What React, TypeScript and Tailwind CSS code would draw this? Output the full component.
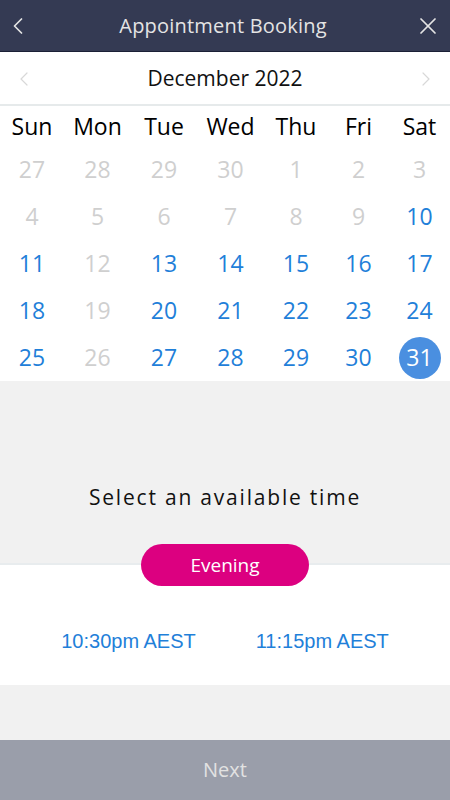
import { ChevronLeft, ChevronRight, X } from "lucide-react";

const weekdays = ["Sun", "Mon", "Tue", "Wed", "Thu", "Fri", "Sat"];

// [label, state] — state: 0 = outside/unavailable, 1 = available, 2 = selected
const days: [string, number][] = [
  ["27", 0], ["28", 0], ["29", 0], ["30", 0], ["1", 0], ["2", 0], ["3", 0],
  ["4", 0], ["5", 0], ["6", 0], ["7", 0], ["8", 0], ["9", 0], ["10", 1],
  ["11", 1], ["12", 0], ["13", 1], ["14", 1], ["15", 1], ["16", 1], ["17", 1],
  ["18", 1], ["19", 0], ["20", 1], ["21", 1], ["22", 1], ["23", 1], ["24", 1],
  ["25", 1], ["26", 0], ["27", 1], ["28", 1], ["29", 1], ["30", 1], ["31", 2],
];

const cols = "grid grid-cols-[64px_67px_66px_67px_64px_61px_61px]";

export default function App() {
  return (
    <div className="flex h-[800px] w-[450px] flex-col bg-[#f1f1f1] font-['Open_Sans',sans-serif]">
      <header className="flex h-[52px] shrink-0 items-center justify-between border-b border-[#1b2036] bg-[#343a53] pl-1 pr-2 text-[#e4e4e4]">
        <ChevronLeft className="h-7 w-7" strokeWidth={1.5} />
        <h1 className="text-[20px] tracking-[0.2px]">Appointment Booking</h1>
        <X className="h-7 w-7" strokeWidth={1.5} />
      </header>

      <section className="bg-white">
        <div className="flex h-[54px] items-center justify-between border-b-2 border-[#e6eaeb] px-3 pt-[2px]">
          <ChevronLeft className="h-6 w-6 text-[#d8d8d8]" strokeWidth={1.2} />
          <span className="text-[21px] text-[#111]">December 2022</span>
          <ChevronRight className="h-6 w-6 text-[#d8d8d8]" strokeWidth={1.2} />
        </div>
        <div className={`${cols} h-[40px] items-center text-center text-[23px] text-black`}>
          {weekdays.map((d) => (
            <span key={d}>{d}</span>
          ))}
        </div>
        <div className={`${cols} text-center text-[23px]`}>
          {days.map(([d, s], i) => (
            <div key={i} className="flex h-[47px] items-center justify-center">
              {s === 2 ? (
                <span className="flex h-[42px] w-[42px] items-center justify-center rounded-full bg-[#4a8fe0] text-white">
                  {d}
                </span>
              ) : (
                <span className={s === 1 ? "text-[#1f80d9]" : "text-[#cfcfcf]"}>{d}</span>
              )}
            </div>
          ))}
        </div>
      </section>

      <div className="flex h-[182px] shrink-0 items-end justify-center pb-[50px]">
        <p className="text-[21px] tracking-[1.8px] text-[#111]">Select an available time</p>
      </div>

      <section className="relative flex h-[122px] shrink-0 items-center justify-center gap-[60px] border-t-2 border-[#e8ecee] bg-white pt-[32px] font-['Liberation_Sans',sans-serif] text-[20px] text-[#1f80d9]">
        <span className="absolute left-1/2 top-[-21px] flex h-[42px] w-[168px] -translate-x-1/2 items-center justify-center rounded-full bg-[#dc0080] font-['Open_Sans',sans-serif] text-[19px] text-white">
          Evening
        </span>
        <span>10:30pm AEST</span>
        <span>11:15pm AEST</span>
      </section>

      <div className="flex-1" />

      <button className="h-[60px] shrink-0 bg-[#9a9eaa] text-[20px] text-[#e2e2e2]">Next</button>
    </div>
  );
}
